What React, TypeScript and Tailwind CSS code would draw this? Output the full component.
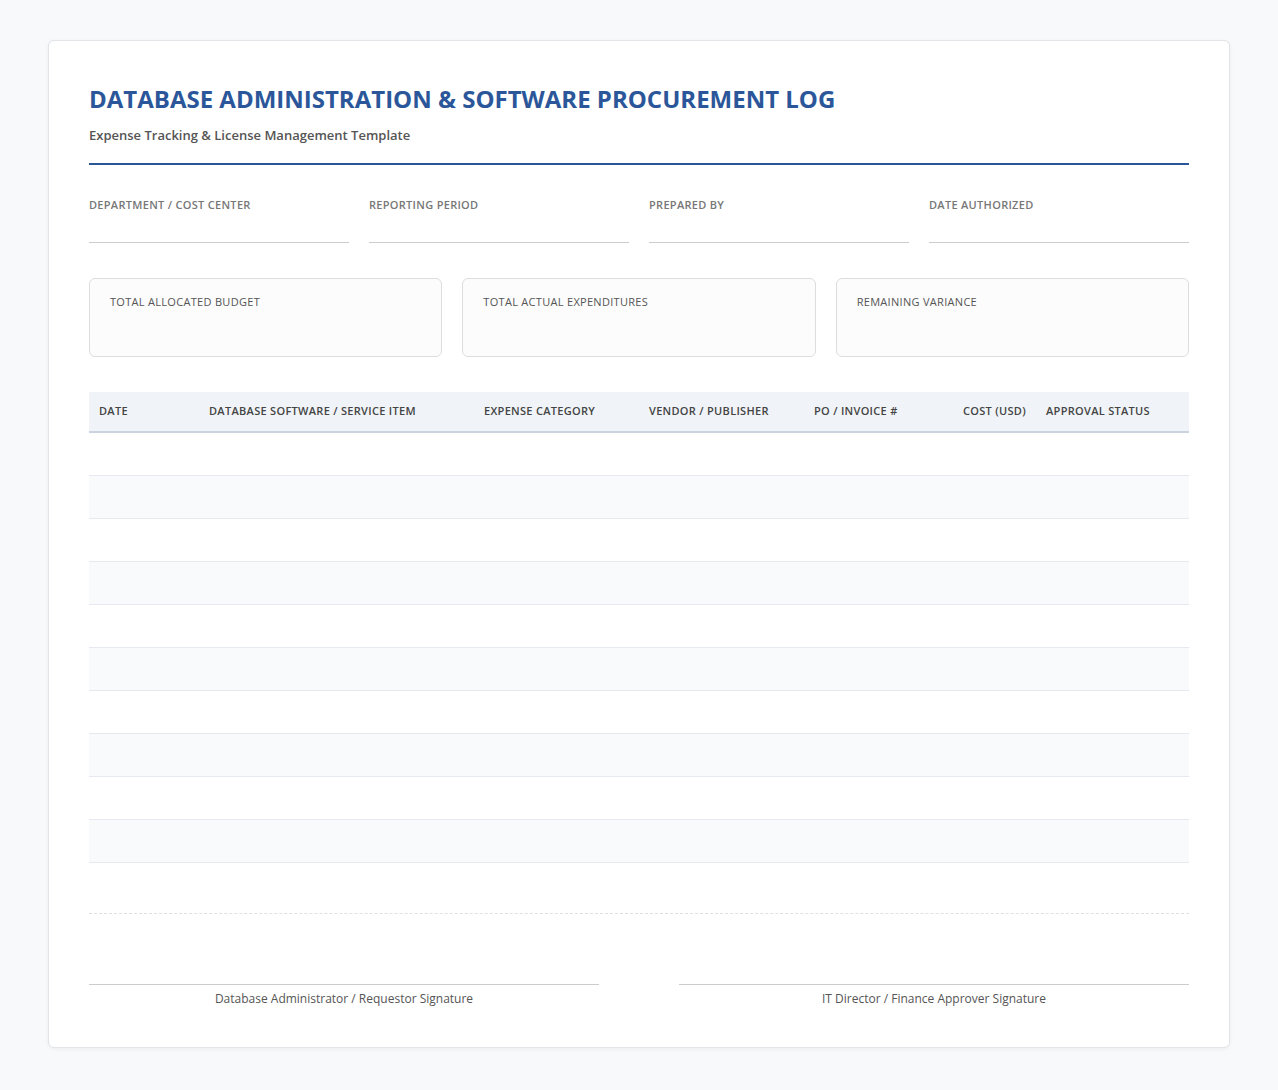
export default function App() {
  const rows = Array.from({ length: 10 });
  const cols = [
    { t: "DATE", w: "w-[110px]" },
    { t: "DATABASE SOFTWARE / SERVICE ITEM", w: "w-[275px]" },
    { t: "EXPENSE CATEGORY", w: "w-[165px]" },
    { t: "VENDOR / PUBLISHER", w: "w-[165px]" },
    { t: "PO / INVOICE #", w: "w-[130px]" },
    { t: "COST (USD)", w: "w-[102px] text-right" },
    { t: "APPROVAL STATUS", w: "flex-1" },
  ];
  return (
    <div className="min-h-[1090px] bg-[#f8f9fa] pt-[40px] px-[48px] pb-[40px]" style={{ fontFamily: '"Open Sans", "Noto Sans", sans-serif' }}>
      <div className="bg-white border border-[#e2e4e8] rounded-[6px] shadow-[0_1px_4px_rgba(0,0,0,0.05)] px-[40px] pt-[40px] pb-[40px]">
        <h1 className="text-[24px] leading-[34px] font-bold text-[#2b579a] mt-[1px]">DATABASE ADMINISTRATION &amp; SOFTWARE PROCUREMENT LOG</h1>
        <p className="text-[13px] font-semibold text-[#555] mt-[10px] leading-[18px]">Expense Tracking &amp; License Management Template</p>
        <div className="border-b-2 border-[#2b579a] mt-[19px]" />
        <div className="grid grid-cols-4 gap-[20px] mt-[32px]">
          {["DEPARTMENT / COST CENTER", "REPORTING PERIOD", "PREPARED BY", "DATE AUTHORIZED"].map((l) => (
            <div key={l} className="border-b border-[#ccc] h-[46px]">
              <div className="text-[11px] text-[#777] font-semibold tracking-[0.3px] leading-[16px]">{l}</div>
            </div>
          ))}
        </div>
        <div className="grid grid-cols-3 gap-[20px] mt-[35px]">
          {["TOTAL ALLOCATED BUDGET", "TOTAL ACTUAL EXPENDITURES", "REMAINING VARIANCE"].map((l) => (
            <div key={l} className="h-[79px] border border-[#ddd] rounded-[6px] bg-[#fcfcfc] px-[20px] pt-[15px]">
              <div className="text-[11px] text-[#555] tracking-[0.3px] leading-[16px]">{l}</div>
            </div>
          ))}
        </div>
        <div className="mt-[35px]">
          <div className="flex h-[41px] items-center bg-[#f0f4f8] border-b-2 border-[#cbd3de] text-[11px] font-semibold text-[#444] tracking-[0.3px]">
            {cols.map((c) => (
              <div key={c.t} className={`${c.w} px-[10px]`}>{c.t}</div>
            ))}
          </div>
          {rows.map((_, i) => (
            <div key={i} className={`h-[43px] border-b border-[#e6eaf0] ${i % 2 === 1 ? "bg-[#f8fafc]" : "bg-white"}`} />
          ))}
          <div className="h-[51px] border-b border-dashed border-[#e0e0e0]" />
        </div>
        <div className="grid grid-cols-2 gap-[80px] mt-[70px]">
          {["Database Administrator / Requestor Signature", "IT Director / Finance Approver Signature"].map((s) => (
            <div key={s} className="border-t border-[#ccc] pt-[6px] text-center text-[12px] text-[#555] leading-[16px]">{s}</div>
          ))}
        </div>
      </div>
    </div>
  );
}
